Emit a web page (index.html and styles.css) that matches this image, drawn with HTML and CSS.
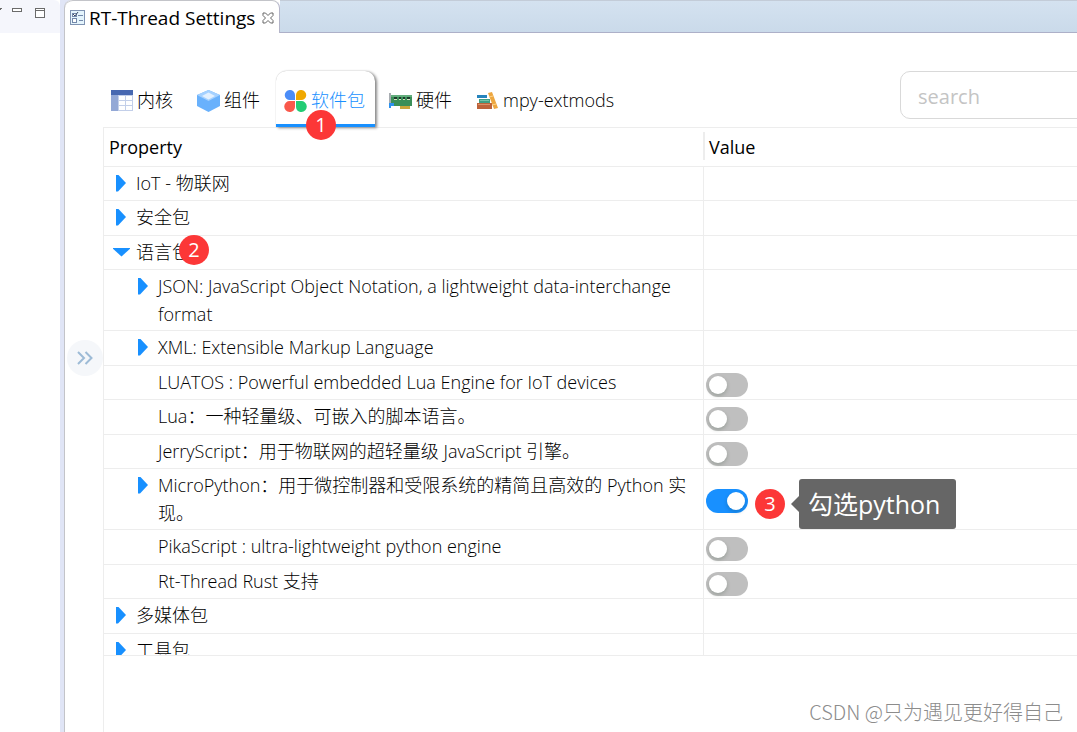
FILE: index.html
```html
<!DOCTYPE html>
<html lang="zh-CN">
<head>
    <meta charset="UTF-8">
    <meta name="viewport" content="width=device-width, initial-scale=1.0">
    <title>RT-Thread Settings</title>
    <link rel="stylesheet" href="styles.css">
</head>
<body>

<div class="workbench">
    <aside class="side-view">
        <div class="side-bar">
            <svg class="side-icons" width="60" height="24" viewBox="0 0 60 24" fill="none" stroke="#6b6b6b" shape-rendering="crispEdges">
                <path d="M0 8.5h2M0 9.5h1"/>
                <rect x="12.500" y="8.500" width="9" height="3" fill="#fff"/>
                <rect x="35.500" y="8.500" width="9" height="9" fill="#fff"/>
                <path d="M35 10.500h10"/>
            </svg>
        </div>
    </aside>

    <main class="editor">
        <div class="editor-bar">
            <div class="editor-tab">
                <svg width="16" height="16" viewBox="0 0 16 16">
                    <rect x=".5" y=".5" width="14" height="14" fill="#e4f4fc" stroke="#7f93b2"/>
                    <g fill="#fff" stroke="#7388aa">
                        <rect x="2.500" y="3.500" width="4" height="3"/>
                        <rect x="2.500" y="8.500" width="4" height="4"/>
                        <path d="M8 5.500h5M9 10.500h4"/>
                    </g>
                    <path d="M3 4l2 2 3-4" fill="none" stroke="#3b4c68"/>
                </svg>
                <span>RT-Thread Settings</span>
                <button class="close" aria-label="Close">
                    <svg width="12" height="12" viewBox="0 0 12 12" fill="#fff" stroke="#666">
                        <path d="M1 1h2.500L6 3.500 8.500 1H11v2.500L8.500 6 11 8.500V11H8.500L6 8.500 3.500 11H1V8.500L3.500 6 1 3.500z"/>
                    </svg>
                </button>
            </div>
            <div class="editor-fill"></div>
        </div>

        <div class="settings">
            <div class="toolbar">
                <nav class="tabs">
                    <button class="tab">
                        <svg width="23" height="23" viewBox="0 0 23 23">
                            <path d="M1 1h22v5H1z" fill="#4768b1"/>
                            <path d="M1 6h7v16H1z" fill="#93a8d6"/>
                            <path d="M8 6h15v16H8z" fill="#c3cfe9"/>
                            <path d="M9 7h6v4H9zM16 7h6v4h-6zM9 12h6v4H9zM16 12h6v4h-6zM9 17h6v4H9zM16 17h6v4h-6z" fill="#fff"/>
                        </svg>
                        内核
                    </button>
                    <button class="tab">
                        <svg width="23" height="23" viewBox="0 0 23 23">
                            <path d="M11.500 1 23 6v11l-11.500 6L0 17V6z" fill="#69b1fc"/>
                            <path d="M11.500 1 23 6l-11.500 6L0 6z" fill="#a5d1ff"/>
                            <path d="M11.500 3.500 18 7l-6.500 3.500L5 7z" fill="#e2f0ff"/>
                        </svg>
                        组件
                    </button>
                    <button class="tab active">
                        <svg width="23" height="23" viewBox="0 0 23 23">
                            <path d="M5.500 1A5 5 0 0 1 11 6v5H6A5 5 0 0 1 5.500 1z" fill="#4b8df8"/>
                            <path d="M17.500 1A5 5 0 0 0 12 6v5h5A5 5 0 0 0 17.500 1z" fill="#f0a800"/>
                            <path d="M5.500 23A5 5 0 0 0 11 18v-6H6A5 5 0 0 0 5.500 23z" fill="#f9584b"/>
                            <path d="M17.500 23A5 5 0 0 1 12 18v-6h5A5 5 0 0 1 17.500 23z" fill="#22cc74"/>
                        </svg>
                        软件包
                        <span class="badge badge-tab">1</span>
                    </button>
                    <button class="tab">
                        <svg width="23" height="23" viewBox="0 0 23 23">
                            <path d="M1 4v15" stroke="#8b9299" stroke-width="1.500"/>
                            <path d="M2 6h21v11H2z" fill="#3a8f58"/>
                            <path d="M2 6h21v2H2z" fill="#62ad7c"/>
                            <path d="M5 8h3v2H5zM10 8h2v2h-2zM14 8h2v2h-2zM18 8h3v2h-3z" fill="#1d3b2b"/>
                            <path d="M5 10h3v1H5zM10 10h2v1h-2zM14 10h2v1h-2zM18 10h3v1h-3z" fill="#d5e4c2"/>
                            <path d="M11 17h10v3H11z" fill="#c9a63c"/>
                            <path d="M0 14h5v3H2v2H0z" fill="#2d92ee"/>
                        </svg>
                        硬件
                    </button>
                    <button class="tab">
                        <svg width="23" height="23" viewBox="0 0 23 23">
                            <path d="M1 6h10v3H1z" fill="#2684bd"/>
                            <path d="M3 10h11v4H3z" fill="#3f9f83"/>
                            <path d="M4 11h9v1H4z" fill="#75c4a8"/>
                            <path d="M1 14h15v6H1z" fill="#bd633a"/>
                            <path d="M2 15h12v1H2z" fill="#dd9067"/>
                            <path d="M12 4l4-1 6 16-4 1z" fill="#eda740"/>
                            <path d="M13 8l4-1M16 16l4-1" stroke="#ffd28a"/>
                        </svg>
                        mpy-extmods
                    </button>
                </nav>
                <input class="search" type="text" placeholder="search" aria-label="search">
            </div>

            <div class="panel">
                <div class="table-view">
                    <table class="tree">
                        <colgroup>
                            <col class="col-property">
                            <col>
                        </colgroup>
                        <thead>
                            <tr>
                                <th>Property</th>
                                <th>Value</th>
                            </tr>
                        </thead>
                        <tbody>
                            <tr>
                                <td><div class="node"><button class="arrow" aria-label="Expand"></button><span>IoT - 物联网</span></div></td>
                                <td></td>
                            </tr>
                            <tr>
                                <td><div class="node"><button class="arrow" aria-label="Expand"></button><span>安全包</span></div></td>
                                <td></td>
                            </tr>
                            <tr>
                                <td><div class="node"><button class="arrow open" aria-label="Collapse"></button><span>语言包</span><span class="badge badge-node">2</span></div></td>
                                <td></td>
                            </tr>
                            <tr>
                                <td><div class="node child"><button class="arrow" aria-label="Expand"></button><span>JSON: JavaScript Object Notation, a lightweight data-interchange format</span></div></td>
                                <td></td>
                            </tr>
                            <tr>
                                <td><div class="node child"><button class="arrow" aria-label="Expand"></button><span>XML: Extensible Markup Language</span></div></td>
                                <td></td>
                            </tr>
                            <tr>
                                <td><div class="node child leaf"><label for="luatos">LUATOS : Powerful embedded Lua Engine for IoT devices</label></div></td>
                                <td><input class="switch" type="checkbox" id="luatos"></td>
                            </tr>
                            <tr>
                                <td><div class="node child leaf"><label for="lua">Lua：一种轻量级、可嵌入的脚本语言。</label></div></td>
                                <td><input class="switch" type="checkbox" id="lua"></td>
                            </tr>
                            <tr>
                                <td><div class="node child leaf"><label for="jerry">JerryScript：用于物联网的超轻量级 JavaScript 引擎。</label></div></td>
                                <td><input class="switch" type="checkbox" id="jerry"></td>
                            </tr>
                            <tr>
                                <td><div class="node child"><button class="arrow" aria-label="Expand"></button><label for="mpy">MicroPython：用于微控制器和受限系统的精简且高效的 Python 实现。</label></div></td>
                                <td>
                                    <input class="switch" type="checkbox" id="mpy" checked>
                                    <span class="badge badge-value">3</span>
                                    <span class="tip">勾选python</span>
                                </td>
                            </tr>
                            <tr>
                                <td><div class="node child leaf"><label for="pika">PikaScript : ultra-lightweight python engine</label></div></td>
                                <td><input class="switch" type="checkbox" id="pika"></td>
                            </tr>
                            <tr>
                                <td><div class="node child leaf"><label for="rust">Rt-Thread Rust 支持</label></div></td>
                                <td><input class="switch" type="checkbox" id="rust"></td>
                            </tr>
                            <tr>
                                <td><div class="node"><button class="arrow" aria-label="Expand"></button><span>多媒体包</span></div></td>
                                <td></td>
                            </tr>
                            <tr>
                                <td><div class="node"><button class="arrow" aria-label="Expand"></button><span>工具包</span></div></td>
                                <td></td>
                            </tr>
                        </tbody>
                    </table>
                </div>
            </div>
        </div>

        <button class="drawer" aria-label="Open drawer">
            <svg width="16" height="14" viewBox="0 0 16 14" fill="none" stroke="#9dbbd6" stroke-width="2">
                <path d="M1 1l6 6-6 6M8.500 1l6 6-6 6"/>
            </svg>
        </button>
        <div class="watermark">CSDN @只为遇见更好得自己</div>
    </main>
</div>

</body>
</html>
```

FILE: styles.css
```css
* { box-sizing: border-box; }

body {
    margin: 0;
    background: #fff;
    color: #000;
    font-family: "Open Sans", "Noto Sans CJK SC", sans-serif;
    font-size: 18px;
    font-weight: 300;
    line-height: 28px;
}

button {
    margin: 0;
    padding: 0;
    border: 0;
    background: none;
    color: inherit;
    font: inherit;
    cursor: pointer;
}

svg { display: block; flex: none; }

/* workbench frame */
.workbench { display: flex; height: 100vh; overflow: hidden; background: #e0e5f6; }
.side-view { flex: none; width: 60px; margin-right: 4px; background: #fff; }
.side-bar { height: 33px; background: #f5f6fc; border-radius: 0 6px 0 0; }
.editor {
    position: relative;
    flex: 1;
    min-width: 0;
    display: flex;
    flex-direction: column;
    overflow: hidden;
    background: #fff;
    border-left: 1px solid #c3c4c9;
    border-radius: 8px 0 0 0;
}
.editor-bar { display: flex; height: 33px; flex: none; }
.editor-tab {
    display: flex;
    align-items: center;
    gap: 3px;
    padding: 2px 5px 0 5px;
    border-top: 1px solid #c3c4c9;
    border-right: 1px solid #b4b5c9;
    border-radius: 8px 8px 0 0;
    font-size: 19px;
    font-weight: 400;
    white-space: nowrap;
}
.close { margin-left: 4px; }
.editor-fill {
    flex: 1;
    background: linear-gradient(#d4e2f0, #cadaea);
    border-top: 1px solid #c3ccd8;
    border-bottom: 1px solid #adb0c8;
}

/* settings page */
.settings { flex: 1; display: flex; flex-direction: column; padding: 38px 0 0 37px; }
.toolbar { display: flex; align-items: flex-start; height: 56px; flex: none; }
.tabs { display: flex; align-self: stretch; }
.tab {
    position: relative;
    display: flex;
    align-items: center;
    gap: 4px;
    margin-right: 6px;
    padding: 2px 10px 0 8px;
    white-space: nowrap;
}
.tab.active {
    color: #1890ff;
    border-bottom: 3px solid #1890ff;
    border-radius: 10px 10px 0 0;
    box-shadow: 2px 1px 3px #888, 0 0 1px #bbb;
    padding-top: 5px;
}
.search {
    width: 240px;
    height: 48px;
    margin: 0 -63px 0 auto;
    padding: 2px 17px 0;
    border: 1px solid #d9d9d9;
    border-radius: 10px;
    font: inherit;
    font-size: 20px;
    font-weight: 400;
}
.search::placeholder { color: #c4c4c4; }

.panel { flex: 1; margin-left: 1px; border: 1px solid #ededed; border-width: 1px 0 0 1px; }
.table-view { max-height: 528px; overflow: hidden; border-bottom: 1px solid #ededed; }

/* property tree */
.tree { width: 100%; table-layout: fixed; border-spacing: 0; }
.col-property { width: 600px; }
.tree th {
    position: relative;
    height: 39px;
    padding: 0 5px;
    border-bottom: 1px solid #ededed;
    font-weight: 500;
    text-align: left;
}
.tree th:first-child::after {
    content: "";
    position: absolute;
    top: 4px;
    right: -1px;
    width: 2px;
    height: 28px;
    background: #ededed;
}
.tree td {
    position: relative;
    height: 34px;
    padding: 2px 8px;
    border-bottom: 1px solid #ededed;
    vertical-align: top;
}
.tree tr:nth-child(5n) td, .tree tr:nth-child(5n + 2) td { height: 35px; }
.tree td:first-child { border-right: 1px solid #ededed; }
.tree td:last-child { padding: 4px 2px 0; vertical-align: middle; }

.node { display: flex; gap: 6px; }
.node.child { padding-left: 22px; }
.node.leaf { padding-left: 46px; }
.arrow { flex: none; width: 18px; height: 28px; }
.arrow::before {
    content: "";
    display: block;
    width: 10px;
    height: 17px;
    margin-left: 4px;
    background: #1890ff;
    clip-path: polygon(0 0, 20% 0, 100% 50%, 20% 100%, 0 100%);
}
.arrow.open::before {
    width: 17px;
    height: 9px;
    margin-left: 1px;
    clip-path: polygon(0 0, 100% 0, 100% 15%, 50% 100%, 0 15%);
}

.switch {
    appearance: none;
    display: block;
    width: 42px;
    height: 24px;
    margin: 0;
    padding: 3px;
    border-radius: 12px;
    background: #bfbfbf;
}
.switch::before {
    content: "";
    display: block;
    width: 18px;
    height: 18px;
    border-radius: 9px;
    background: #fff;
    box-shadow: 0 2px 4px rgba(0, 35, 11, 0.2);
}
.switch:checked { background: #1890ff; }
.switch:checked::before { margin-left: auto; }

/* step marks */
.badge {
    position: absolute;
    width: 30px;
    height: 30px;
    border-radius: 15px;
    background: #fc3737;
    color: #fff;
    font-size: 20px;
    font-weight: 400;
    line-height: 29px;
    text-align: center;
    z-index: 1;
}
.badge-tab { left: 30px; top: 39px; }
.badge-node { left: 75px; top: -1px; }
.badge-value { left: 51px; top: 20px; }
.tip {
    position: absolute;
    left: 95px;
    top: 10px;
    height: 50px;
    padding: 0 16px 0 9px;
    border-radius: 3px;
    background: #666;
    color: #fff;
    font-size: 25px;
    font-weight: 400;
    line-height: 50px;
    white-space: nowrap;
}
.tip::before {
    content: "";
    position: absolute;
    left: -8px;
    top: 17px;
    border: solid transparent;
    border-width: 8px 8px 8px 0;
    border-right-color: #666;
}

.drawer {
    position: absolute;
    left: 2px;
    top: 340px;
    display: flex;
    align-items: center;
    justify-content: center;
    width: 36px;
    height: 36px;
    border-radius: 18px;
    background: #f5f7fa;
}
.watermark {
    position: absolute;
    right: 14px;
    bottom: 6px;
    color: #8c8c8c;
    font-family: "Noto Sans CJK SC", sans-serif;
    font-size: 20px;
}
```
